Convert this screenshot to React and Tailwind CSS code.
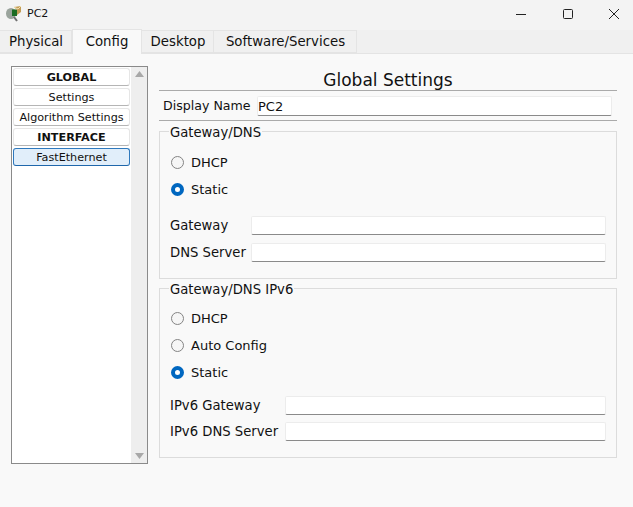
const font = "font-['DejaVu_Sans',sans-serif]";

function Tab({ label, w, active }) {
  if (active) {
    return (
      <div className={`${w} h-[25px] -mt-px pb-[1px] bg-[#f9f9f9] border border-b-0 border-[#e4e4e4] flex items-center justify-center text-[13.3px] text-[#111] relative z-10`}>
        {label}
      </div>
    );
  }
  return (
    <div className={`${w} h-[23px] bg-[#f0f0f0] border border-[#e4e4e4] border-l-0 flex items-center justify-center text-[13.3px] text-[#111]`}>
      <span className="pt-[1px] pl-[1px]">{label}</span>
    </div>
  );
}

function SideItem({ label, bold, active }) {
  return (
    <div
      className={`h-[18px] w-[117px] pt-[1px] rounded-[3px] border flex items-center justify-center text-[11.2px] leading-none ${
        active ? "bg-[#e1eefa] border-[#2f79bd] border-b-[#1f67ab]" : "bg-white border-[#e6e6e6] border-b-[#b5b5b5]"
      } ${bold ? "font-bold" : ""} text-[#111]`}
    >
      {label}
    </div>
  );
}

function Radio({ label, checked, mb }) {
  return (
    <div className={`flex items-center h-[14px] ${mb}`}>
      {checked ? (
        <span className="ml-[1px] -mt-[1px] w-[13px] h-[13px] rounded-full bg-white border-[4px] border-[#0067c0] shrink-0" />
      ) : (
        <span className="ml-[1px] -mt-[1px] w-[13px] h-[13px] rounded-full bg-[#f6f6f6] border border-[#848484] shrink-0" />
      )}
      <span className="ml-[7px] text-[13px] text-[#111]">{label}</span>
    </div>
  );
}

function Field({ label, w, mb }) {
  return (
    <div className={`flex items-center h-[19px] ${mb}`}>
      <span className={`${w} shrink-0 pt-[1px] text-[13.2px] text-[#111] whitespace-nowrap`}>{label}</span>
      <div className="flex-1 h-[19px] bg-white border border-[#ececec] border-b-[#8a8a8a] rounded-[2px]" />
    </div>
  );
}

function Group({ title, h, children }) {
  return (
    <fieldset className={`${h} w-[458px] border border-[#dcdcdc] px-[10px]`}>
      <legend className="-ml-[1px] px-[1px] translate-y-[1px] text-[13.2px] leading-[15px] text-[#111]">{title}</legend>
      {children}
    </fieldset>
  );
}

export default function App() {
  return (
    <div className={`${font} w-[633px] h-[507px] bg-[#f9f9f9] overflow-hidden flex flex-col`}>
      {/* title bar */}
      <div className="h-[30px] shrink-0 bg-[#f3f3f3] flex items-center">
        <svg width="16" height="16" viewBox="0 0 16 16" className="ml-[6px] -mt-[3px]">
          <ellipse cx="5" cy="7.5" rx="5" ry="5.5" fill="#9aa39c" />
          <path d="M8 11l3 4" stroke="#6f6f6f" strokeWidth="2" />
          <rect x="6" y="3.5" width="5" height="6.5" fill="#1b6b22" />
          <path d="M8 1l7-1v6l-4 3V4z" fill="#c39c55" />
          <path d="M8 1l4 2 3-3" fill="none" stroke="#f0dfb0" strokeWidth="1" />
        </svg>
        <span className="ml-[5px] -mt-[1px] text-[11px] text-[#111]">PC2</span>
        <div className="ml-auto flex items-center -mt-[3px]">
          <svg width="12" height="12" viewBox="0 0 12 12" className="mr-[35px]">
            <path d="M1 6.5h10" stroke="#222" strokeWidth="1" />
          </svg>
          <svg width="12" height="12" viewBox="0 0 12 12" className="mr-[34px]">
            <rect x="1.5" y="1.5" width="9" height="9" rx="1" fill="none" stroke="#222" strokeWidth="1" />
          </svg>
          <svg width="12" height="12" viewBox="0 0 12 12" className="mr-[13px]">
            <path d="M1 1l10 10M11 1L1 11" stroke="#222" strokeWidth="1" />
          </svg>
        </div>
      </div>

      {/* tabs */}
      <div className="h-[24px] shrink-0 bg-[#f0f0f0] border-b border-[#e4e4e4] flex items-start">
        <Tab label="Physical" w="w-[72px]" />
        <Tab label="Config" w="w-[70px]" active />
        <Tab label="Desktop" w="w-[72px]" />
        <Tab label="Software/Services" w="w-[143px]" />
      </div>

      {/* body */}
      <div className="flex-1 flex items-start pt-[12px] pl-[11px]">
        <div className="w-[137px] h-[398px] shrink-0 bg-white border border-[#8a8a8a] flex">
          <div className="w-[119px] pl-[1px] pt-[1px] flex flex-col gap-[2px]">
            <SideItem label="GLOBAL" bold />
            <SideItem label="Settings" />
            <SideItem label="Algorithm Settings" />
            <SideItem label="INTERFACE" bold />
            <SideItem label="FastEthernet" active />
          </div>
          <div className="flex-1 bg-[#eeeeee] flex flex-col items-center justify-between py-[4px]">
            <svg width="9" height="6" viewBox="0 0 9 6"><path d="M4.5 0L9 6H0z" fill="#a8a8a8" /></svg>
            <svg width="9" height="6" viewBox="0 0 9 6"><path d="M4.5 6L9 0H0z" fill="#a8a8a8" /></svg>
          </div>
        </div>

        <div className="ml-[11px] w-[458px]">
          <div className="h-[25px] border-b border-[#aaaaaa] text-center text-[17px] leading-[29px] text-[#111]">
            Global Settings
          </div>
          <div className="h-[30px] border-b border-[#aaaaaa] flex items-center pl-[4px] pt-[1px]">
            <span className="w-[94px] pt-[1px] text-[12.6px] text-[#111] whitespace-nowrap">Display Name</span>
            <div className="w-[355px] h-[20px] pt-[1px] bg-white border border-[#ececec] border-b-[#8a8a8a] rounded-[2px] flex items-center text-[13px] text-[#111]">
              PC2
            </div>
          </div>

          <div className="mt-[3px]">
            <Group title="Gateway/DNS" h="h-[155px]">
              <div className="pt-[17px]">
                <Radio label="DHCP" mb="mb-[13px]" />
                <Radio label="Static" checked mb="mb-[19px]" />
                <Field label="Gateway" w="w-[81px]" mb="mb-[8px]" />
                <Field label="DNS Server" w="w-[81px]" />
              </div>
            </Group>
          </div>

          <div className="mt-[2px]">
            <Group title="Gateway/DNS IPv6" h="h-[177px]">
              <div className="pt-[16px]">
                <Radio label="DHCP" mb="mb-[13px]" />
                <Radio label="Auto Config" mb="mb-[13px]" />
                <Radio label="Static" checked mb="mb-[16px]" />
                <Field label="IPv6 Gateway" w="w-[115px]" mb="mb-[7px]" />
                <Field label="IPv6 DNS Server" w="w-[115px]" />
              </div>
            </Group>
          </div>
        </div>
      </div>
    </div>
  );
}
